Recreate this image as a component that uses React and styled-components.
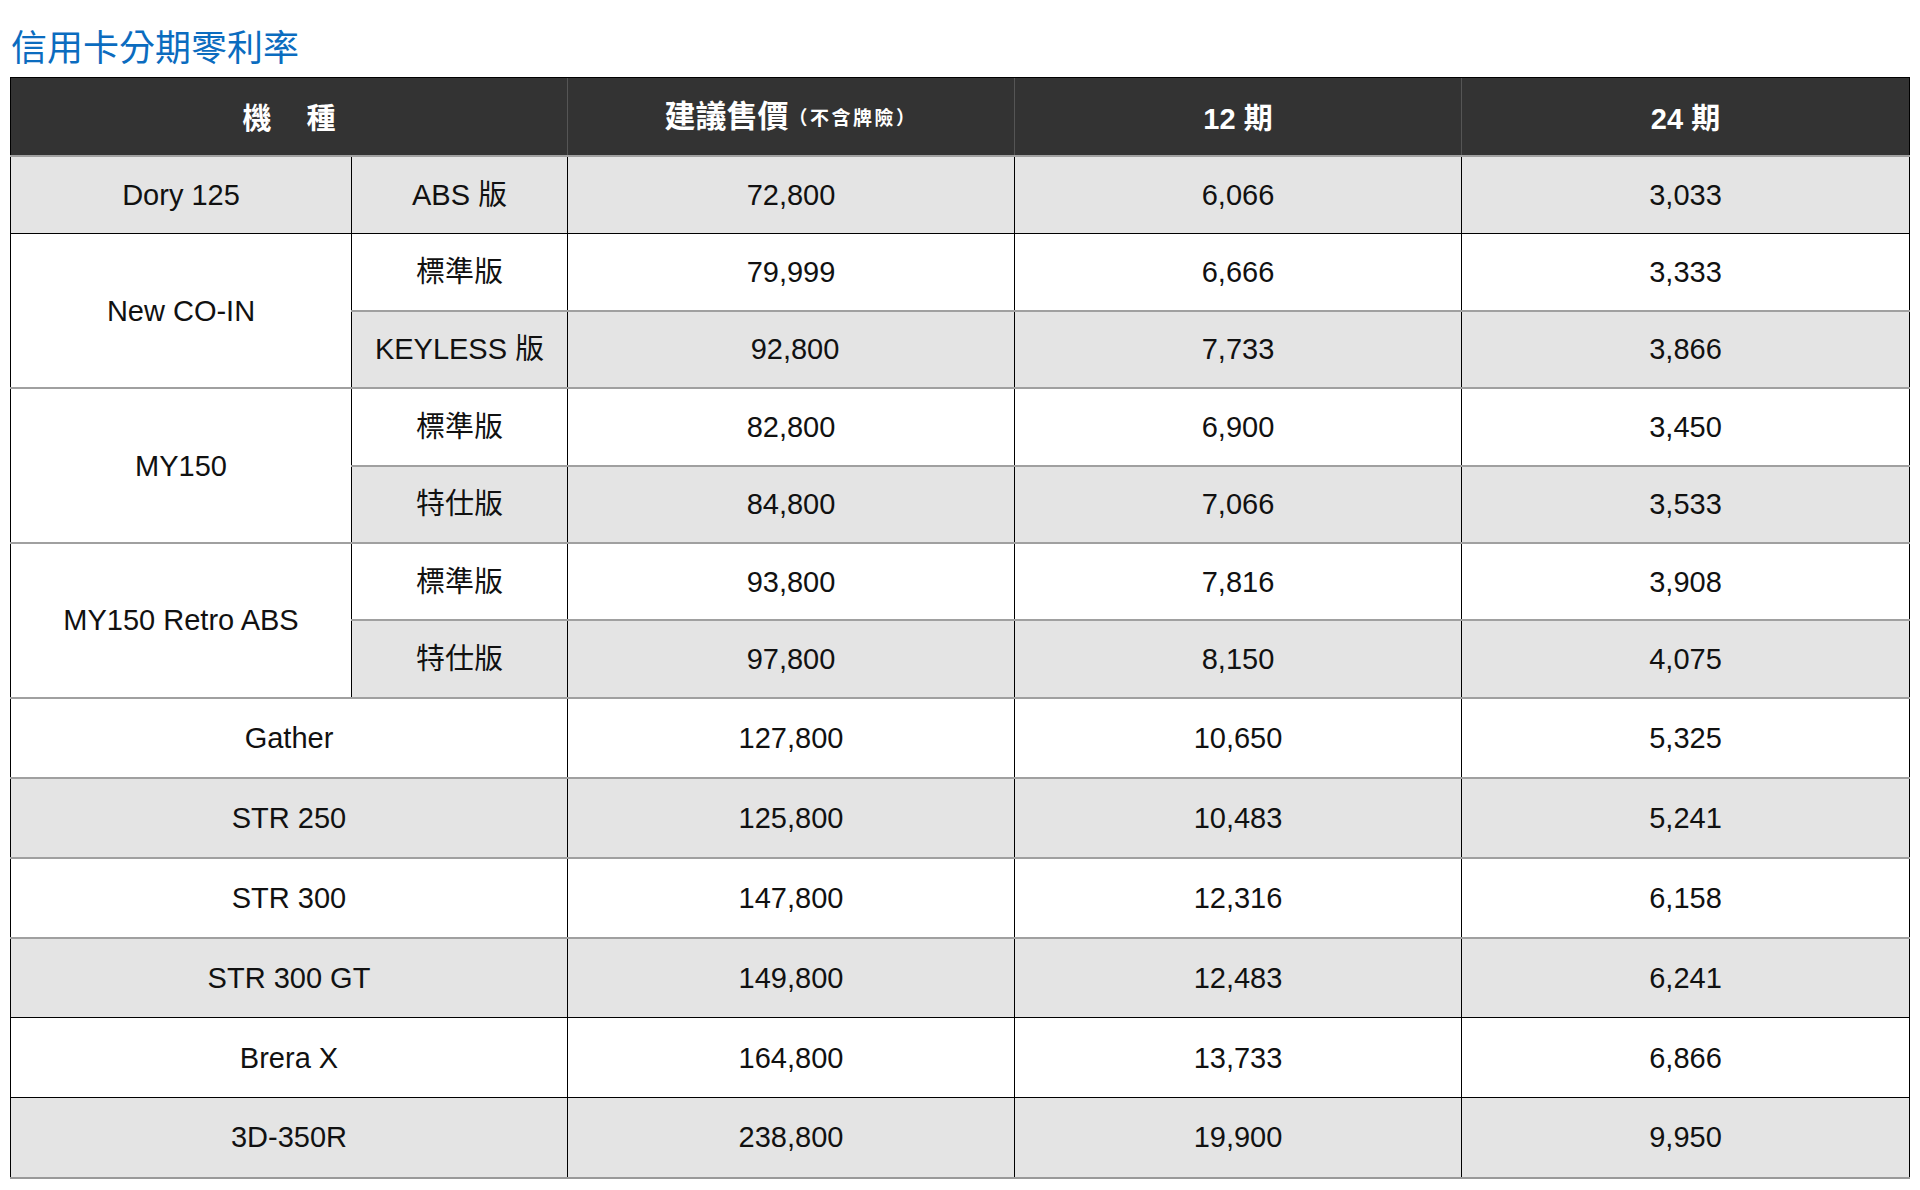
import styled, { createGlobalStyle } from 'styled-components'

const GlobalStyle = createGlobalStyle`
  html, body {
    margin: 0;
    padding: 0;
    background: #fff;
  }
  body {
    font-family: "Liberation Sans", "Noto Sans CJK TC", sans-serif;
    color: #000;
  }
`

const models = [
  { name: 'Dory 125', shaded: true, variants: [['ABS 版', '72,800', '6,066', '3,033']] },
  {
    name: 'New CO-IN',
    line: 'dark',
    variants: [
      ['標準版', '79,999', '6,666', '3,333'],
      ['KEYLESS 版', '\u00a092,800', '7,733', '3,866'],
    ],
  },
  {
    name: 'MY150',
    variants: [
      ['標準版', '82,800', '6,900', '3,450'],
      ['特仕版', '84,800', '7,066', '3,533'],
    ],
  },
  {
    name: 'MY150 Retro ABS',
    variants: [
      ['標準版', '93,800', '7,816', '3,908'],
      ['特仕版', '97,800', '8,150', '4,075'],
    ],
  },
  { name: 'Gather', single: ['127,800', '10,650', '5,325'] },
  { name: 'STR 250', shaded: true, single: ['125,800', '10,483', '5,241'] },
  { name: 'STR 300', single: ['147,800', '12,316', '6,158'] },
  { name: 'STR 300 GT', shaded: true, single: ['149,800', '12,483', '6,241'] },
  { name: 'Brera X', line: 'dark', single: ['164,800', '13,733', '6,866'] },
  { name: '3D-350R', line: 'dark', shaded: true, single: ['238,800', '19,900', '9,950'] },
]

function App() {
  return (
    <Page>
      <GlobalStyle />
      <Title>信用卡分期零利率</Title>
      <Table>
        <colgroup>
          <col style={{ width: 341 }} />
          <col style={{ width: 216 }} />
          <col style={{ width: 447 }} />
          <col style={{ width: 447 }} />
          <col style={{ width: 448 }} />
        </colgroup>
        <thead>
          <tr>
            <Th colSpan={2}>
              <Spaced>機　種</Spaced>
            </Th>
            <Th>
              <Big>建議售價</Big>
              <Note>（不含牌險）</Note>
            </Th>
            <Th>12 期</Th>
            <Th>24 期</Th>
          </tr>
        </thead>
        <tbody>
          {models.map((m) => {
            if (m.single) {
              return (
                <Row key={m.name} $tall>
                  <Td colSpan={2} $shaded={m.shaded} $line={m.line}>{m.name}</Td>
                  {m.single.map((v, i) => (
                    <Td key={i} $shaded={m.shaded} $line={m.line}>{v}</Td>
                  ))}
                </Row>
              )
            }
            return m.variants.map((v, idx) => {
              const shaded = m.shaded || idx % 2 === 1
              const line = idx === 0 ? m.line : 'soft'
              return (
                <Row key={m.name + idx}>
                  {idx === 0 && (
                    <Td rowSpan={m.variants.length} $shaded={m.shaded} $line={m.line}>
                      {m.name}
                    </Td>
                  )}
                  {v.map((cell, i) => (
                    <Td key={i} $shaded={shaded} $line={line}>{cell}</Td>
                  ))}
                </Row>
              )
            })
          })}
        </tbody>
      </Table>
    </Page>
  )
}

export default App

const Page = styled.div`
  padding: 24px 10px 12px 10px;
`

const Title = styled.h2`
  margin: 0 0 11px 1px;
  font-family: "Noto Sans CJK TC", sans-serif;
  font-weight: 400;
  font-size: 36px;
  line-height: 42px;
  color: #0b6cbf;
`

const Table = styled.table`
  width: 1899px;
  table-layout: fixed;
  border-collapse: collapse;
  border-left: 1px solid #000;
  border-right: 1px solid #000;
  border-bottom: 2px solid #999;
`

const Th = styled.th`
  height: 73px;
  padding: 4px 0 0;
  background: #333;
  color: #fff;
  font-family: "Liberation Sans", "Noto Sans CJK TC", sans-serif;
  font-weight: 700;
  font-size: 29px;
  line-height: 34px;
  text-align: center;
  vertical-align: middle;
  border-top: 1px solid #000;
  border-left: 1px solid #555;
  &:first-child {
    border-left: 1px solid #000;
  }
`

const Spaced = styled.span`
  letter-spacing: 3px;
  margin-left: 3px;
`

const Big = styled.span`
  font-size: 31px;
`

const Note = styled.span`
  font-size: 19px;
  letter-spacing: 2.5px;
  position: relative;
  top: -2px;
`

const Row = styled.tr`
  height: ${(p) => (p.$tall ? '80px' : '77.4px')};
`

const Td = styled.td`
  padding: 0;
  text-align: center;
  vertical-align: middle;
  font-size: 29px;
  line-height: 34px;
  color: #111;
  background: ${(p) => (p.$shaded ? '#e4e4e4' : '#fff')};
  border-left: 1px solid #000;
  border-right: 1px solid #000;
  border-top: ${(p) => (p.$line === 'dark' ? '1px solid #000' : '2px solid #a0a0a0')};
`
